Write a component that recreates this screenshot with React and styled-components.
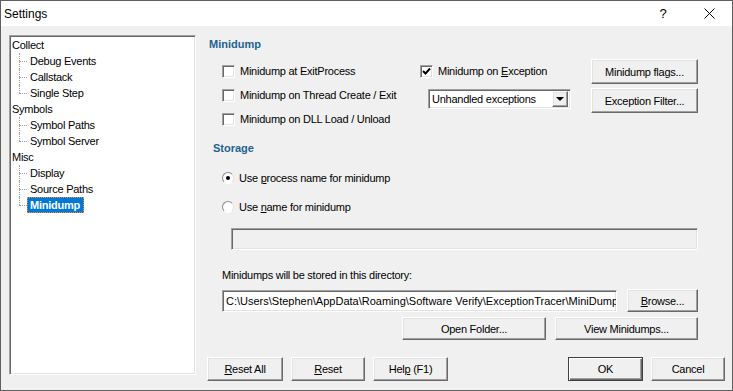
import React from 'react';
import styled, { createGlobalStyle, css } from 'styled-components';

const GlobalStyle = createGlobalStyle`
  body {
    margin: 0;
    background: #fff;
  }
  * {
    box-sizing: border-box;
  }
`;

const sunken = css`
  border: 1px solid;
  border-color: #a0a0a0 #fff #fff #a0a0a0;
  box-shadow: inset 1px 1px #696969, inset -1px -1px #e3e3e3;
`;

const raised = css`
  border: 1px solid;
  border-color: #fff #696969 #696969 #fff;
  box-shadow: inset -1px -1px #a0a0a0, inset 1px 1px #e3e3e3;
`;

const Window = styled.div`
  width: 733px;
  height: 391px;
  border: 1px solid #5f5f5f;
  background: #f0f0f0;
  display: flex;
  flex-direction: column;
  font-family: "Liberation Sans", Arial, sans-serif;
  font-size: 11px;
  letter-spacing: -0.25px;
  color: #000;
`;

const TitleBar = styled.div`
  height: 25px;
  background: #fff;
  display: flex;
  align-items: center;
  padding-left: 3px;
`;

const Title = styled.span`
  font-size: 12px;
  letter-spacing: 0;
  flex: 1;
`;

const CaptionButton = styled.div`
  width: 46px;
  height: 25px;
  display: flex;
  align-items: center;
  justify-content: center;
  font-size: 13px;
  letter-spacing: 0;
`;

const Body = styled.div`
  flex: 1;
  display: flex;
  align-items: flex-start;
  padding: 9px 7px 8px 8px;
`;

const Tree = styled.div`
  ${sunken};
  width: 187px;
  height: 340px;
  background: #fff;
  padding: 1px 2px;
`;

const TreeRoot = styled.div`
  height: 16px;
  line-height: 16px;
`;

const TreeChild = styled.div`
  position: relative;
  height: 16px;
  line-height: 16px;
  margin-left: 16px;

  &::before {
    content: '';
    position: absolute;
    left: -9px;
    top: 0;
    height: ${p => (p.$last ? '8px' : '16px')};
    border-left: 1px dotted #a0a0a0;
  }

  &::after {
    content: '';
    position: absolute;
    left: -9px;
    top: 8px;
    width: 8px;
    border-top: 1px dotted #a0a0a0;
  }
`;

const TreeLabel = styled.span`
  display: inline-block;
  padding: 0 2px;
  ${p => p.$selected && css`
    padding: 0 4px 0 3px;
    margin-left: -1px;
    background: #0078d7;
    color: #fff;
    font-weight: bold;
    outline: 1px dotted #ff8728;
    outline-offset: -1px;
  `}
`;

const Content = styled.div`
  margin-left: 11px;
  width: 518px;
  display: flex;
  flex-direction: column;
`;

const Heading = styled.div`
  height: 16px;
  line-height: 16px;
  font-weight: bold;
  color: #1d6392;
  letter-spacing: 0;
  margin: ${p => p.$margin};
`;

const Group = styled.div`
  display: flex;
  margin-top: 7px;
  padding-left: 15px;
`;

const Column = styled.div`
  display: flex;
  flex-direction: column;
  width: ${p => p.$width};
  gap: ${p => p.$gap || '0px'};
`;

const OptionRow = styled.label`
  height: 24px;
  display: flex;
  align-items: center;
  gap: 5px;
`;

const CheckBox = styled.span`
  ${sunken};
  width: 13px;
  height: 13px;
  background: #fff;
  display: flex;
  align-items: center;
  justify-content: center;
`;

const Radio = styled.span`
  width: 12px;
  height: 12px;
  border-radius: 50%;
  border: 1px solid;
  border-color: #8a8a8a #e3e3e3 #fff #8a8a8a;
  background: #fff;
  display: flex;
  align-items: center;
  justify-content: center;

  &::after {
    content: '';
    width: 4px;
    height: 4px;
    border-radius: 50%;
    background: ${p => (p.$checked ? '#000' : 'transparent')};
  }
`;

const Combo = styled.div`
  ${sunken};
  width: 143px;
  height: 20px;
  margin: 6px 0 0 8px;
  background: #fff;
  display: flex;
  align-items: center;
  padding: 2px 2px 2px 3px;
`;

const ComboText = styled.span`
  flex: 1;
`;

const ComboArrow = styled.span`
  ${raised};
  width: 16px;
  height: 16px;
  background: #f0f0f0;
  display: flex;
  align-items: center;
  justify-content: center;

  &::after {
    content: '';
    border-left: 4px solid transparent;
    border-right: 4px solid transparent;
    border-top: 4px solid #000;
  }
`;

const Button = styled.div`
  ${raised};
  width: ${p => p.$width};
  height: ${p => p.$height || '23px'};
  background: #f0f0f0;
  display: flex;
  align-items: center;
  justify-content: center;
  ${p => p.$default && css`
    border-color: #404040;
    box-shadow: inset 1px 1px #fff, inset -1px -1px #696969, inset -2px -2px #a0a0a0;
  `}
`;

const RadioList = styled.div`
  display: flex;
  flex-direction: column;
  gap: 5px;
  margin-top: 10px;
  padding-left: 15px;
`;

const TextBox = styled.div`
  ${sunken};
  width: ${p => p.$width};
  height: 22px;
  background: ${p => (p.$disabled ? '#f0f0f0' : '#fff')};
  margin-left: ${p => p.$indent || '0px'};
  margin-top: ${p => p.$top || '0px'};
  padding: 0 3px;
  display: flex;
  align-items: center;
  white-space: nowrap;
  overflow: hidden;
  letter-spacing: 0;
`;

const Caption = styled.div`
  margin-top: 17px;
  padding-left: 15px;
  line-height: 16px;
`;

const Row = styled.div`
  display: flex;
  align-items: center;
  gap: ${p => p.$gap};
  margin-top: ${p => p.$top};
  padding-left: ${p => p.$indent || '0px'};
  justify-content: ${p => p.$justify || 'flex-start'};
  padding-right: ${p => p.$right || '0px'};
`;

const Spacer = styled.div`
  flex: 1;
`;

const CheckMark = () => (
  <svg width="9" height="9" viewBox="0 0 9 9">
    <path d="M1 4 L3.5 6.5 L8 1.5" stroke="#000" strokeWidth="2" fill="none" />
  </svg>
);

const CloseIcon = () => (
  <svg width="11" height="11" viewBox="0 0 11 11">
    <path d="M0.5 0.5 L10.5 10.5 M10.5 0.5 L0.5 10.5" stroke="#000" strokeWidth="1" />
  </svg>
);

const tree = [
  { name: 'Collect', children: ['Debug Events', 'Callstack', 'Single Step'] },
  { name: 'Symbols', children: ['Symbol Paths', 'Symbol Server'] },
  { name: 'Misc', children: ['Display', 'Source Paths', 'Minidump'] },
];

const Check = ({ checked, children }) => (
  <OptionRow>
    <CheckBox>{checked && <CheckMark />}</CheckBox>
    <span>{children}</span>
  </OptionRow>
);

const App = () => {
  return (
    <>
      <GlobalStyle />
      <Window>
        <TitleBar>
          <Title>Settings</Title>
          <CaptionButton>?</CaptionButton>
          <CaptionButton><CloseIcon /></CaptionButton>
        </TitleBar>
        <Body>
          <Tree>
            {tree.map(node => (
              <div key={node.name}>
                <TreeRoot>{node.name}</TreeRoot>
                {node.children.map((child, i) => (
                  <TreeChild key={child} $last={i === node.children.length - 1}>
                    <TreeLabel $selected={child === 'Minidump'}>{child}</TreeLabel>
                  </TreeChild>
                ))}
              </div>
            ))}
          </Tree>
          <Content>
            <Heading $margin="1px 0 0 2px">Minidump</Heading>
            <Group>
              <Column $width="198px">
                <Check>Minidump at ExitProcess</Check>
                <Check>Minidump on Thread Create / Exit</Check>
                <Check>Minidump on DLL Load / Unload</Check>
              </Column>
              <Column $width="171px">
                <Check checked>Minidump on <u>E</u>xception</Check>
                <Combo>
                  <ComboText>Unhandled exceptions</ComboText>
                  <ComboArrow />
                </Combo>
              </Column>
              <Column $width="107px" $gap="4px">
                <Button $width="107px" $height="25px">Minidump flags...</Button>
                <Button $width="107px" $height="25px">Exception Filter...</Button>
              </Column>
            </Group>
            <Heading $margin="9px 0 0 6px">Storage</Heading>
            <RadioList>
              <OptionRow>
                <Radio $checked />
                <span>Use <u>p</u>rocess name for minidump</span>
              </OptionRow>
              <OptionRow>
                <Radio />
                <span>Use <u>n</u>ame for minidump</span>
              </OptionRow>
            </RadioList>
            <TextBox $width="467px" $indent="24px" $top="9px" $disabled />
            <Caption>Minidumps will be stored in this directory:</Caption>
            <Row $gap="10px" $top="6px" $indent="15px">
              <TextBox $width="395px">
                C:\Users\Stephen\AppData\Roaming\Software Verify\ExceptionTracer\MiniDump
              </TextBox>
              <Button $width="71px"><u>B</u>rowse...</Button>
            </Row>
            <Row $gap="9px" $top="5px" $justify="flex-end" $right="27px">
              <Button $width="144px">Open Folder...</Button>
              <Button $width="143px">View Minidumps...</Button>
            </Row>
            <Row $gap="8px" $top="17px">
              <Button $width="76px" $height="24px"><u>R</u>eset All</Button>
              <Button $width="74px" $height="24px"><u>R</u>eset</Button>
              <Button $width="75px" $height="24px">Hel<u>p</u>&nbsp;(F1)</Button>
              <Spacer />
              <Button $width="75px" $height="24px" $default>OK</Button>
              <Button $width="74px" $height="24px">Cancel</Button>
            </Row>
          </Content>
        </Body>
      </Window>
    </>
  );
};

export default App;
